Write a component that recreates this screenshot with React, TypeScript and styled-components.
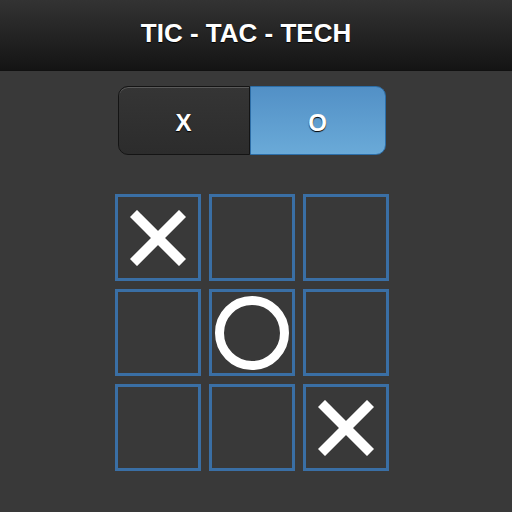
import { useState } from 'react'
import styled, { createGlobalStyle } from 'styled-components'

type Mark = 'X' | 'O' | null

const initialBoard: Mark[] = ['X', null, null, null, 'O', null, null, null, 'X']

const App = () => {
  const [player, setPlayer] = useState<'X' | 'O'>('O')
  const [board] = useState<Mark[]>(initialBoard)

  return (
    <>
      <GlobalStyle />
      <Page>
        <Header>
          <Title>TIC - TAC - TECH</Title>
        </Header>
        <Main>
          <Toggle>
            <ToggleButton $active={player === 'X'} onClick={() => setPlayer('X')}>
              X
            </ToggleButton>
            <ToggleButton $active={player === 'O'} onClick={() => setPlayer('O')}>
              O
            </ToggleButton>
          </Toggle>
          <Board>
            {board.map((mark, i) => (
              <Cell key={i}>
                {mark === 'X' && <XMark />}
                {mark === 'O' && <OMark />}
              </Cell>
            ))}
          </Board>
        </Main>
      </Page>
    </>
  )
}

export default App

const XMark = () => (
  <svg width="56" height="56" viewBox="0 0 56 56">
    <line x1="7" y1="7" x2="49" y2="49" stroke="#fff" strokeWidth="10" strokeLinecap="square" />
    <line x1="49" y1="7" x2="7" y2="49" stroke="#fff" strokeWidth="10" strokeLinecap="square" />
  </svg>
)

const OMark = () => (
  <svg width="74" height="74" viewBox="0 0 74 74">
    <circle cx="37" cy="37" r="32.5" fill="none" stroke="#fff" strokeWidth="9" />
  </svg>
)

const GlobalStyle = createGlobalStyle`
  html, body {
    margin: 0;
    padding: 0;
    background: #393939;
    font-family: "Liberation Sans", Arial, sans-serif;
  }
`
const Page = styled.div({
  width: 512,
  height: 512,
  background: '#393939',
  display: 'flex',
  flexDirection: 'column'
})
const Header = styled.header({
  height: 71,
  borderBottom: '1px solid #111',
  background: 'linear-gradient(#333, #141414)',
  display: 'flex',
  alignItems: 'center',
  justifyContent: 'center',
  paddingRight: 20,
  boxSizing: 'border-box'
})
const Title = styled.h1({
  margin: 0,
  color: '#fff',
  fontSize: 26,
  fontWeight: 700,
  textShadow: '0 1px 1px #000',
  marginTop: -3
})
const Main = styled.main({
  display: 'flex',
  flexDirection: 'column',
  alignItems: 'center',
  paddingRight: 9,
  paddingTop: 15
})
const Toggle = styled.div({
  display: 'flex',
  width: 268,
  height: 69
})
const ToggleButton = styled.button<{ $active: boolean }>`
  flex: 1;
  font-family: inherit;
  font-size: 24px;
  font-weight: 700;
  color: #fff;
  padding: 4px 0 0;
  text-shadow: 0 1px 1px #000;
  cursor: pointer;
  border: 1px solid ${(p) => (p.$active ? '#2c6ea8' : '#141414')};
  background: ${(p) =>
    p.$active ? 'linear-gradient(#5290c6, #6aaad8)' : 'linear-gradient(#353535, #2c2c2c)'};
  box-shadow: ${(p) => (p.$active ? 'none' : 'inset 0 1px 0 #5a5a5a')};

  &:first-child {
    flex: 0 0 132px;
    border-radius: 10px 0 0 10px;
  }
  &:last-child {
    border-radius: 0 10px 10px 0;
  }
`
const Board = styled.div({
  marginTop: 39,
  display: 'grid',
  gridTemplateColumns: 'repeat(3, 86px)',
  gridAutoRows: '87px',
  columnGap: 8,
  rowGap: 8
})
const Cell = styled.div({
  border: '3px solid #3a6fa5',
  display: 'flex',
  alignItems: 'center',
  justifyContent: 'center'
})
